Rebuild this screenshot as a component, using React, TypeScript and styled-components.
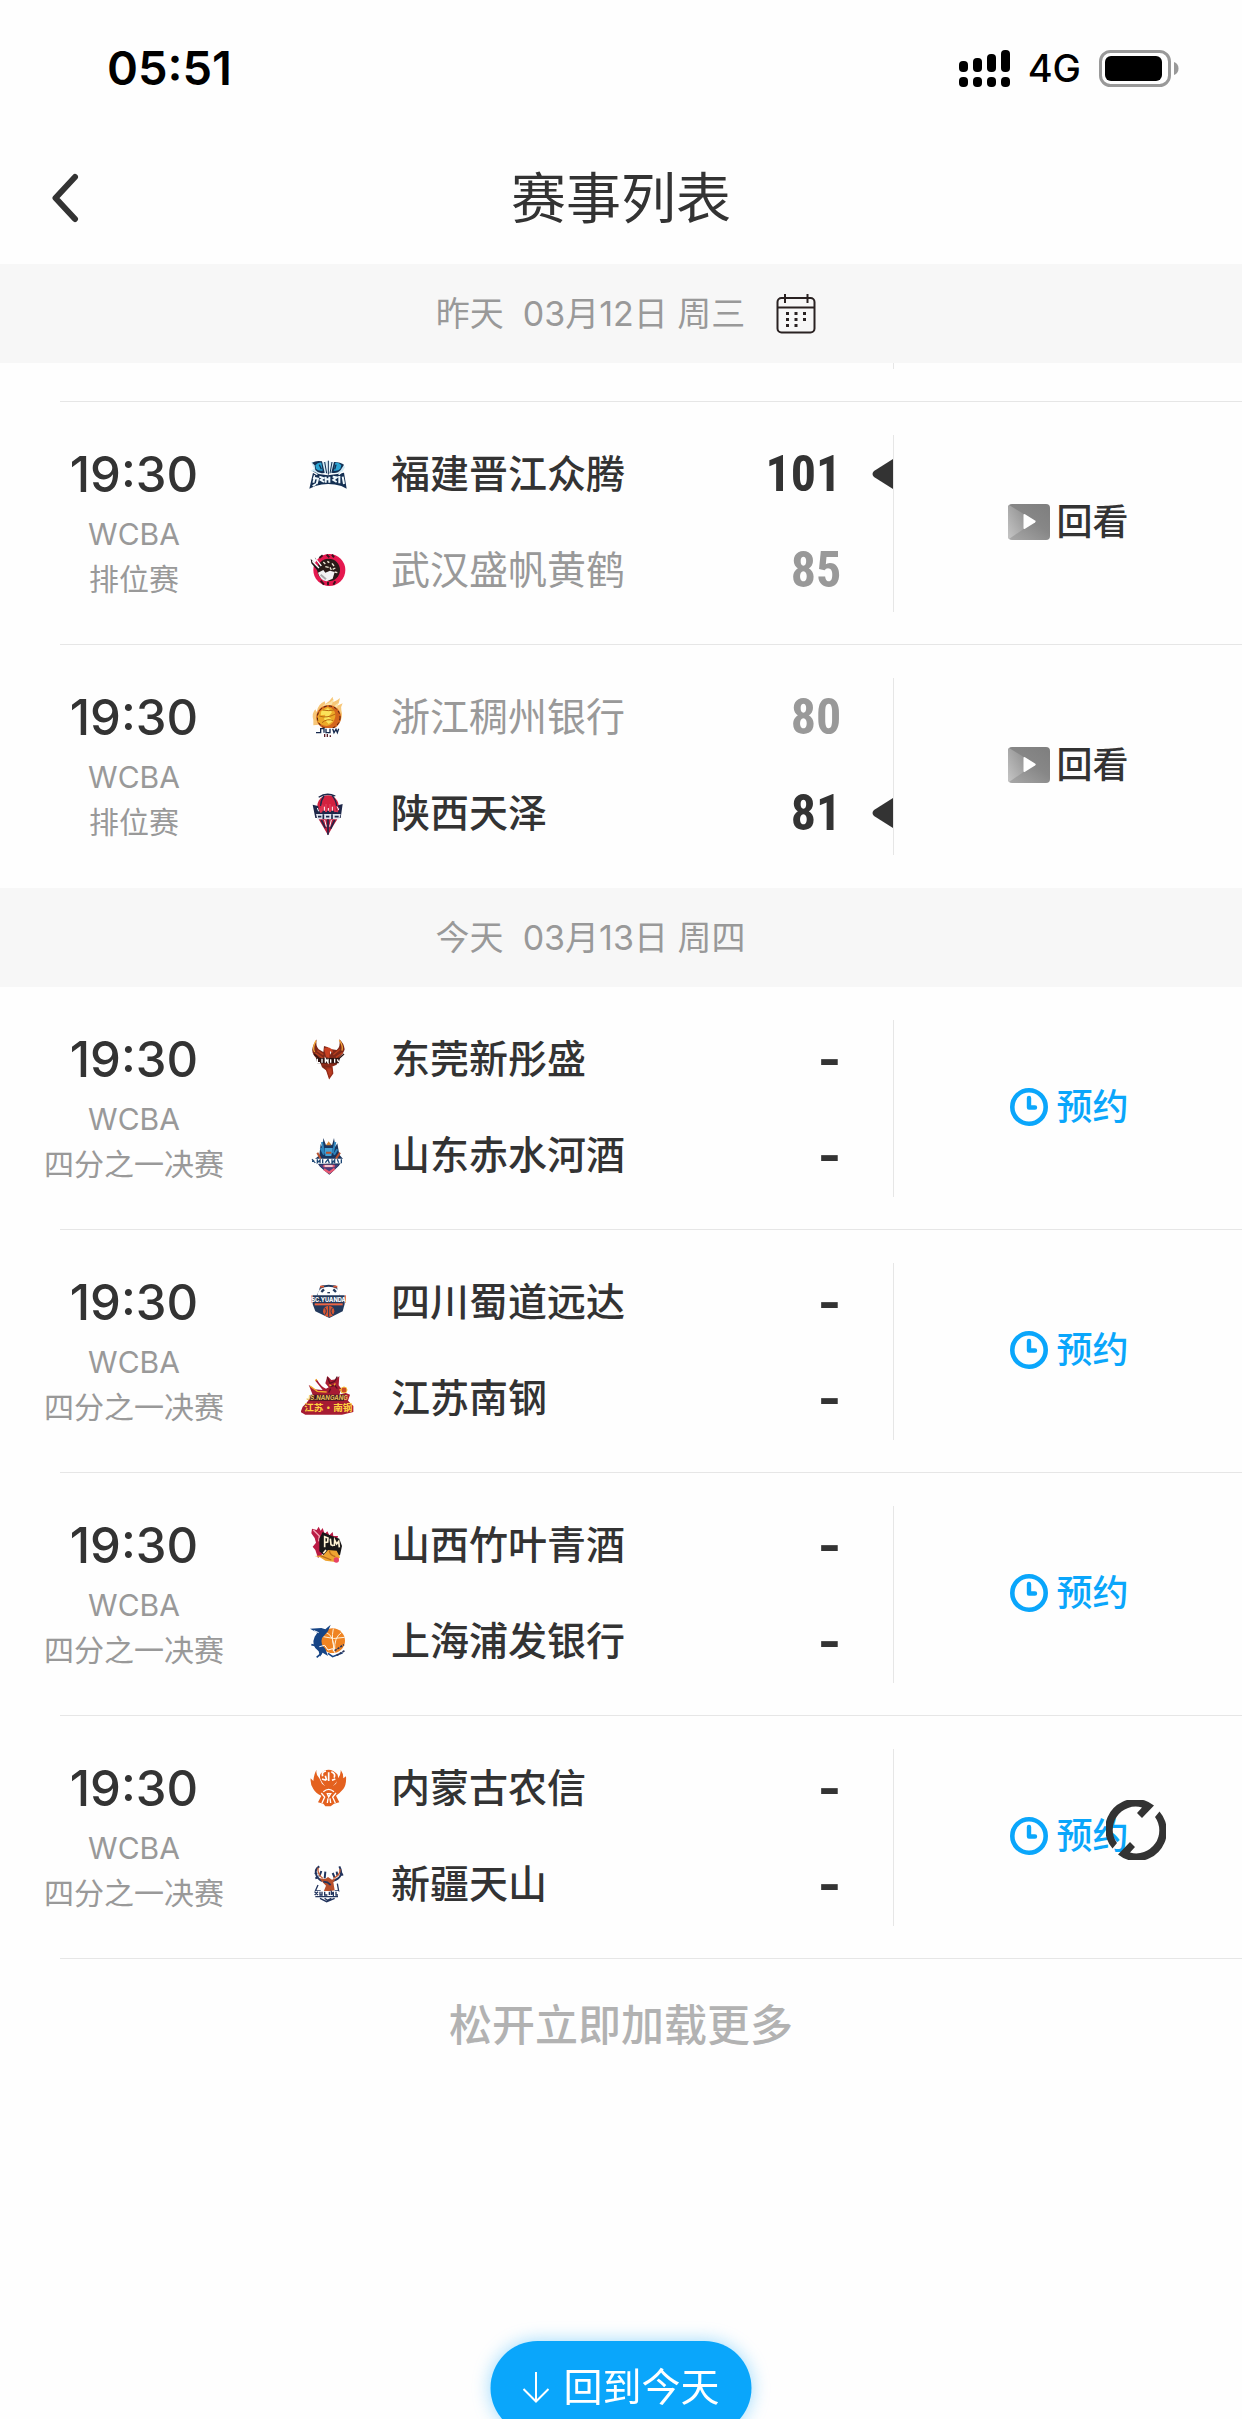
import React from 'react';
import styled, { createGlobalStyle } from 'styled-components';

const INK = '#333333';
const MUTED = '#999999';
const BLUE = '#0aa6fb';
const LINE = '#e6e6e6';

const GlobalStyle = createGlobalStyle`
  *, *::before, *::after { box-sizing: border-box; }
  body {
    margin: 0;
    background: #fefefe;
    color: ${INK};
    font-family: Inter, "Noto Sans CJK SC", sans-serif;
  }
  button { font: inherit; color: inherit; background: none; border: 0; padding: 0; cursor: pointer; }
  svg { display: block; }
`;

const Page = styled.div`
  position: relative;
  min-height: 100vh;
  overflow: hidden;
`;

const StatusBar = styled.div`
  display: flex;
  align-items: center;
  justify-content: space-between;
  height: 136px;
  padding: 0 63px 0 107px;
  color: #000;
`;

const Clock = styled.span`
  font-size: 47px;
  line-height: 56px;
  font-weight: 600;
`;

const StatusIcons = styled.div`
  display: flex;
  align-items: center;
  gap: 18px;
  font-size: 38px;
  line-height: 48px;
  font-weight: 500;
`;

const NavBar = styled.header`
  display: grid;
  grid-template-columns: 160px 1fr 160px;
  align-items: center;
  height: 128px;
  padding-bottom: 5px;
`;

const BackButton = styled.button`
  display: flex;
  align-items: center;
  height: 88px;
  padding-left: 50px;
`;

const Title = styled.h1`
  margin: 0;
  font-size: 55px;
  line-height: 80px;
  font-weight: 400;
  text-align: center;
`;

const DayBar = styled.div`
  display: flex;
  align-items: center;
  justify-content: center;
  gap: 31px;
  height: 99px;
  background: #f7f7f7;
  color: ${MUTED};
  font-size: 34px;
  line-height: 48px;
  white-space: pre;
`;

const CalendarSlot = styled.span`
  display: flex;
  flex: 0 0 30px;
  width: 30px;
`;

const List = styled.ul`
  list-style: none;
  margin: 0;
  padding: 0;
`;

const Row = styled.li`
  display: grid;
  grid-template-columns: 268px 1fr 28%;
  height: 243px;
  padding: 33px 0;
  background: linear-gradient(${LINE}, ${LINE}) 60px 100% / 100% 1px no-repeat;
  &[data-last='true'] { background: none; }
`;

const PreviousRow = styled(Row)`
  height: 39px;
  padding: 0 0 33px;
`;

const When = styled.div`
  display: flex;
  flex-direction: column;
  align-items: center;
  color: ${MUTED};
  font-size: 30px;
  line-height: 45px;
  white-space: nowrap;
`;

const Time = styled.time`
  padding-top: 2px;
  color: ${INK};
  font-size: 49px;
  line-height: 75px;
  font-weight: 500;
`;

const Teams = styled.div`
  grid-column: 2;
  display: flex;
  flex-direction: column;
  gap: 24px;
  border-right: 1px solid ${LINE};
  padding-left: 33px;
`;

const Team = styled.div<{ $muted: boolean }>`
  display: grid;
  grid-template-columns: 54px 1fr auto 52px;
  align-items: center;
  height: 72px;
  color: ${(p) => (p.$muted ? MUTED : INK)};
  font-weight: ${(p) => (p.$muted ? 400 : 500)};
  &:first-child { margin-top: 3px; }
`;

const TeamName = styled.span`
  padding-left: 36px;
  font-size: 39px;
  line-height: 58px;
`;

const Score = styled.span<{ $pending: boolean }>`
  font-family: ${(p) => (p.$pending ? 'Inter, sans-serif' : '"Roboto Condensed", "Liberation Sans", sans-serif')};
  font-size: 50px;
  line-height: 60px;
  font-weight: 700;
`;

const WinnerSlot = styled.span`
  display: flex;
  justify-content: flex-end;
`;

const ActionCell = styled.div`
  display: flex;
  align-items: center;
  justify-content: center;
  padding-bottom: 3px;
`;

const ActionButton = styled.button<{ $blue: boolean }>`
  display: grid;
  grid-template-columns: 42px auto;
  align-items: center;
  justify-items: center;
  gap: 7px;
  color: ${(p) => (p.$blue ? BLUE : INK)};
  font-size: 36px;
  line-height: 54px;
  font-weight: 500;
`;

const LoadMore = styled.p`
  margin: 0;
  padding: 34px 0 320px;
  color: #b2b2b2;
  font-size: 43px;
  line-height: 64px;
  font-weight: 500;
  text-align: center;
`;

const Spinner = styled.div`
  position: fixed;
  right: 76px;
  bottom: 559px;
`;

const TodayButton = styled.button`
  position: fixed;
  left: 50%;
  bottom: -16px;
  transform: translateX(-50%);
  display: flex;
  align-items: center;
  gap: 14px;
  height: 94px;
  padding: 0 32px 2px;
  border-radius: 47px;
  background: ${BLUE};
  box-shadow: 0 0 18px rgba(10, 166, 251, 0.4);
  color: #fff;
  font-size: 39px;
  line-height: 58px;
  white-space: nowrap;
`;

const SignalIcon = () => (
  <svg width="51" height="37" viewBox="0 0 51 37" aria-hidden="true">
    {[11, 8, 4, 0].map((top, i) => (
      <g key={top}>
        <rect x={i * 14} y={top} width="9" height={22 - top} rx="4" />
        <rect x={i * 14} y="27" width="9" height="10" rx="4" />
      </g>
    ))}
  </svg>
);

const BatteryIcon = () => (
  <svg width="80" height="37" viewBox="0 0 80 37" aria-hidden="true">
    <rect x="1.5" y="1.5" width="69" height="34" rx="10" fill="none" stroke="#999" strokeWidth="3" />
    <rect x="6" y="6" width="57" height="25" rx="6" />
    <path d="M75 12c3 1 4.500 3.500 4.500 6.500s-1.500 5.500-4.500 6.500z" fill="#999" />
  </svg>
);

const BackIcon = () => (
  <svg width="30" height="50" viewBox="0 0 30 50" fill="none" stroke={INK} strokeWidth="6" strokeLinecap="round" strokeLinejoin="round" aria-hidden="true">
    <path d="M25 4L5.500 25 25 46" />
  </svg>
);

const CalendarIcon = () => (
  <svg width="40" height="40" viewBox="0 0 40 40" aria-hidden="true">
    <g fill="none" stroke="#2a2222" strokeWidth="2">
      <rect x="1.500" y="4" width="37" height="34.500" rx="4" />
      <path d="M1.500 13.500h37M9 0v9M31.500 0v9" />
    </g>
    <g fill="#2a2222">
      {[18, 24, 30].map((y) =>
        [10, 18.5, 27].map((x) => (y === 30 && x === 27 ? null : <rect key={`${x}-${y}`} x={x} y={y} width="3" height="3" />)),
      )}
    </g>
  </svg>
);

const WinnerMark = () => (
  <svg width="21" height="32" viewBox="0 0 21 32" aria-label="胜">
    <path d="M21 1v30L2 19q-3-3 0-6z" fill={INK} />
  </svg>
);

const ReplayIcon = () => (
  <svg width="42" height="36" viewBox="0 0 42 36" aria-hidden="true">
    <defs>
      <linearGradient id="replayFold" x1="0" y1="1" x2="1" y2="0.300">
        <stop offset="0" stopColor="#c6c6c6" />
        <stop offset="1" stopColor="#858585" />
      </linearGradient>
      <linearGradient id="replayBase" x1="0" y1="1" x2="0.800" y2="0">
        <stop offset="0" stopColor="#a9a9a9" />
        <stop offset="0.600" stopColor="#878787" />
        <stop offset="1" stopColor="#808080" />
      </linearGradient>
    </defs>
    <rect width="42" height="36" rx="4" fill="url(#replayBase)" />
    <path d="M1 1L27 17 1 35Q0 34 0 32V4Q0 2 1 1z" fill="url(#replayFold)" />
    <path d="M15.500 11q0-1.500 1.500-.7L27 16.500q1.500 1 0 2L17 24.700q-1.500.8-1.500-.7z" fill="#fff" />
  </svg>
);

const ClockIcon = () => (
  <svg width="38" height="38" viewBox="0 0 38 38" fill="none" stroke={BLUE} aria-hidden="true">
    <circle cx="19" cy="19" r="16.700" strokeWidth="4.600" />
    <path d="M19 10v9.500h6" strokeWidth="4.400" strokeLinecap="round" strokeLinejoin="round" />
  </svg>
);

const SpinnerIcon = () => (
  <svg width="60" height="60" viewBox="0 0 60 60" fill={INK} role="img" aria-label="加载中">
    <path d="M6.500 48.500A30 30 0 0 1 48 5.500L36 18l-5-5 5-5.500A23 23 0 0 0 11 43z" />
    <path d="M53.500 11.500A30 30 0 0 1 12 54.500L24 42l5 5-5 5.500A23 23 0 0 0 49 17z" />
  </svg>
);

const DownIcon = () => (
  <svg width="27" height="31" viewBox="0 0 27 31" fill="none" stroke="#fff" strokeWidth="2" aria-hidden="true">
    <path d="M13.500 0v29M1 17l12.500 12.500L26 17" />
  </svg>
);

const emblems: Record<string, { cy: number; art: React.ReactNode }> = {
  fujian: {
    cy: 102,
    art: (
      <>
        <path d="M93 66l22 4 28-6 30 6 14-2 8 14-10 18H104l-12-8 10-6z" fill="#cfeaf5" />
        <path d="M96 68q14-8 30-4l8 34q-16 6-28-8l-2-14zM192 74q-14-10-30-8l-8 32q18 4 28-8z" fill="#142f52" />
        <path d="M106 76q8-10 18-8l4 24q-14 2-20-6zM184 76q-8-10-18-8l-5 24q14 2 20-6z" fill="#2ba4d3" />
        <path d="M118 74l6 14M168 74l-4 14" stroke="#142f52" strokeWidth="4" />
        <path d="M139 64h12l2 34h-16z" fill="#e8f5fa" />
        <path d="M145 62v42M134 66l6 34M156 66l-6 34" stroke="#142f52" strokeWidth="3" fill="none" />
        <path d="M100 94l16 8 28 4 28-4 20-4 8 48-16-8q-40-12-78 0l-18 8 6-26z" fill="#142f52" />
        <path d="M98 96l14 8M186 96l-10 8M104 106l-4 12" stroke="#fff" strokeWidth="4" />
        <path d="M100 128l4-14 10 2-4 16M118 110l12 4-8 6 10 6M137 110v18M137 118h9M148 110v18M158 110l12 2-10 8 10 6M178 108v22M188 110l4 22M98 138l10-6" stroke="#eef8fc" strokeWidth="6" fill="none" />
      </>
    ),
  },
  wuhan: {
    cy: 390,
    art: (
      <>
        <circle cx="148" cy="390" r="48" fill="#e5184f" />
        <path d="M118 354l10-8M140 344l8 8M156 344l6 8M122 422l10 12M144 436v-10M160 434l6-10" stroke="#3b121c" strokeWidth="6" />
        <circle cx="146" cy="390" r="34" fill="#2a1b18" />
        <path d="M92 356l28 30-4 10-22-26zM104 352l24 28-8 2z" fill="#1e1a1a" />
        <path d="M97 364l20 20M108 358l16 20" stroke="#fff" strokeWidth="4" />
        <path d="M114 398l16-8 6 8 14-6 14 4-6 20-18 8q-20-4-26-26z" fill="#f3f3f3" />
        <path d="M122 404l16 14" stroke="#aaa" strokeWidth="6" />
        <path d="M130 366l6 6M142 364l6 4M156 370l6 8M166 384l-8 4M136 380l10 2M164 396l8 2M150 382l4 8" stroke="#f1ead9" strokeWidth="4" />
      </>
    ),
  },
  zhejiang: {
    cy: 111,
    art: (
      <>
        <path d="M100 120q-6-20 6-32l4 8q4-24 24-32l2 8q12-6 22-22l2 16q12-4 20-12-2 16-10 24l18-8q-6 10-4 20 6 22-6 38l-78 8z" fill="#f7c779" />
        <path d="M126 84q4-12 12-12 14-4 24-16-4 14-10 24zM160 82q8-10 16-14l-6 18z" fill="#fbe3a9" />
        <circle cx="146" cy="112" r="37" fill="#d4661c" />
        <path d="M112 124q-2-34 30-44 26 4 24 30-6 26-26 28-18-2-28-14z" fill="#eda928" />
        <path d="M124 94l20-10 12 12-10 14 14 12-14 10-14-14 4-14-14 2z" fill="#fbe25a" />
        <path d="M128 90q20 4 34 0M118 108q22 8 48-6M126 128q16-14 34-6" stroke="#b86a10" strokeWidth="3" fill="none" />
        <circle cx="146" cy="112" r="34" fill="none" stroke="#4a1c14" strokeWidth="3" strokeDasharray="9 7" />
        <path d="M106 144h78l-6 16h-64z" fill="#fff" />
        <path d="M108 158h14v-12h10v12M138 146v12h12v-12M158 146l4 12 6-10 4 10 4-12" stroke="#16294d" strokeWidth="4" fill="none" />
        <path d="M134 162v9M142 162v9M151 166v5" stroke="#5a1f28" strokeWidth="4" />
      </>
    ),
  },
  shaanxi: {
    cy: 399,
    art: (
      <>
        <circle cx="144" cy="378" r="32" fill="#d3213f" />
        <path d="M116 352q22-16 50-4M132 348q-10 14-10 30M156 346q12 14 14 32" stroke="#1e2749" strokeWidth="4" fill="none" />
        <path d="M98 374l16 4 4 14h50l6-16 14-4-6 42H106z" fill="#1e2749" />
        <path d="M118 384l6 14M128 374l-4 22M138 372v24M150 372v24M162 376l4 20M176 384l-6 12" stroke="#dd3352" strokeWidth="6" />
        <path d="M112 384l4 10M133 380v12M145 384v8M157 380v12M172 380l4 10" stroke="#fff" strokeWidth="3" />
        <path d="M108 402h74l-4 16H112z" fill="#dfe3ed" />
        <path d="M114 410h10M130 403v14M138 410h10M156 403v14M164 410h12" stroke="#1e2749" strokeWidth="5" />
        <path d="M116 418h56l-14 22-14 26-16-28z" fill="#b91d3c" />
        <path d="M124 420l12 24M144 418v46M164 420l-12 26" stroke="#1e2749" strokeWidth="5" />
        <path d="M134 420l5 20M154 420l-5 20" stroke="#fff" strokeWidth="3" />
      </>
    ),
  },
  dongguan: {
    cy: 117,
    art: (
      <>
        <path d="M110 58q-18 28-12 40 6 16 20 22l8 22 14 10 8 24 8-20-4-14 18-8 8-22q14-14 16-24-2-18-16-30 4 24-8 32l-14-2-4 16-8-22-12-4-2 18-14-8q-10-10-6-30z" fill="#7e2819" />
        <path d="M108 62q-12 22-4 34M178 60q12 18 8 32" stroke="#f4a83a" strokeWidth="4" fill="none" />
        <path d="M106 98l22 16M112 92l18 12M188 98l-20 14M180 88l-20 16" stroke="#b8401f" strokeWidth="4" />
        <path d="M102 102l20 18M192 102l-20 18" stroke="#2d1210" strokeWidth="4" />
        <path d="M132 86q10-10 24 2l4 10-10-4-2 20-10-4z" fill="#c84022" />
        <path d="M108 114h72l-4 16h-64z" fill="#2d1210" />
        <path d="M112 116v12h8M126 116v12M136 128v-12l8 12v-12M152 118v10M164 116v12M172 118l4 8" stroke="#fff" strokeWidth="4" fill="none" />
        <path d="M126 134l36 2M138 144l18-2 2 18-10 14z" stroke="#962c1a" strokeWidth="4" fill="#b83c22" />
      </>
    ),
  },
  shandong: {
    cy: 405,
    art: (
      <>
        <path d="M130 354l8 22 10-8 8 8 6-22 4 26 6-10 6 34 12 14-14 20-28 26-28-24-16-22 14-12 4-34 6 12z" fill="#19355f" />
        <path d="M126 366l6 34M166 366l-8 34M122 384l10 20M172 388l-10 16" stroke="#2f86be" strokeWidth="6" />
        <path d="M138 376l8-12 8 12z" fill="#d98531" />
        <path d="M134 384h24l-4 24h-18z" fill="#46a2d5" />
        <path d="M112 398l10 18M180 398l-12 18M138 398h16" stroke="#b8512f" strokeWidth="6" />
        <path d="M94 416h102l-8 14-86 2z" fill="#fff" />
        <path d="M96 418l10 10M112 418v10l8-8v10M128 418v12M136 428l8-10 4 12M156 418v12l8-10v10M172 418l4 10M184 418v12M96 424h8" stroke="#1d4775" strokeWidth="4" fill="none" />
        <path d="M116 434h60l-26 28z" fill="#4b3d7c" />
        <path d="M130 438h34M132 448l16 10 16-12" stroke="#e85972" strokeWidth="7" fill="none" />
        <path d="M134 438h24" stroke="#fff" strokeWidth="4" />
      </>
    ),
  },
  sichuan: {
    cy: 126,
    art: (
      <>
        <path d="M118 90q0-16 16-14 12-4 24 0 16-2 14 14l8 16H110z" fill="#23395c" />
        <path d="M112 102q6-22 34-22t34 22l-4 8h-60z" fill="#fff" />
        <path d="M120 80h12M160 80h12" stroke="#e15b35" strokeWidth="5" />
        <path d="M132 88l-8 8M160 88l8 8" stroke="#23395c" strokeWidth="7" />
        <path d="M142 98h8" stroke="#23395c" strokeWidth="4" />
        <path d="M98 106h96v26l-6 22-40 20-42-20-8-22z" fill="#23395c" />
        <path d="M96 106v22M196 106v22" stroke="#e15b35" strokeWidth="3" />
        <text x="146" y="125" textAnchor="middle" fontFamily="Inter, sans-serif" fontSize="17" fontWeight="800" fill="#fff">SC.YUANDA</text>
        <path d="M104 133h84" stroke="#ec6544" strokeWidth="6" />
        <circle cx="146" cy="154" r="17" fill="#d75632" />
        <path d="M146 138v32M134 143q10 10 0 22M158 143q-10 10 0 22" stroke="#23395c" strokeWidth="3" fill="none" />
      </>
    ),
  },
  jiangsu: {
    cy: 414,
    art: (
      <>
        <path d="M86 374l16 14 26 2-22-28 4-4q14 24 28 28l8-4-10-12 6-22 12 12 14-2 10-10-2 28 8 10-6 18 18-6 14 6-6 18 16 16v18l-34 8H76l-14-8 6-16 12-12 10-14 8-10z" fill="#a61c33" />
        <path d="M142 352l8 18 14-6 8-14M150 380l14-4 8 10M152 386l-6 12" stroke="#5c1020" strokeWidth="4" fill="none" />
        <path d="M148 374l6 4M166 370l-4 6M90 378l22 16 28 2M106 362l4-4M178 390l16-4M184 398l12-6" stroke="#f0a629" strokeWidth="4" fill="none" />
        <circle cx="192" cy="390" r="9" fill="#ce4a27" stroke="#f2c442" strokeWidth="3" />
        <path d="M92 404h104l-4 18H88z" fill="#3b1522" />
        <text x="142" y="421" textAnchor="middle" fontFamily="Inter, sans-serif" fontSize="18" fontStyle="italic" fontWeight="700" fill="#e9c25a">JS.NANGANG</text>
        <text x="145" y="454" textAnchor="middle" fontFamily="Noto Sans CJK SC, sans-serif" fontSize="29" fontWeight="700" fill="#ffd23e">江苏·南钢</text>
      </>
    ),
  },
  shanxi: {
    cy: 135,
    art: (
      <>
        <path d="M96 86l14 4 6-10 6 12 6-8 6 18 8-8 6 12 10-10 2 12 14 0-4 16-56 50-8-24-8-10 10-12-4-14-10-14z" fill="#ba1b44" />
        <path d="M100 90l18 18-2 16" stroke="#f3a6b7" strokeWidth="4" fill="none" />
        <path d="M118 116l10-20 18 8 32 12 8 22-6 28-42 6-20-18z" fill="#191717" />
        <path d="M134 142v-32l10 4-1 12-8 1M151 116l2 18 7 3M163 138l1-18 6 12 6-8 2 18M138 150l-8 10" stroke="#fff3d3" strokeWidth="5" fill="none" />
        <path d="M104 168l26-2 14-16 26 2 10 20-14 14-30-4-16-10z" fill="#eea431" />
        <path d="M120 166l34 14M148 152q2 14 18 18" stroke="#b96a19" strokeWidth="4" fill="none" />
        <circle cx="169" cy="180" r="8" fill="#e74365" />
      </>
    ),
  },
  shanghai: {
    cy: 423,
    art: (
      <>
        <circle cx="158" cy="422" r="37" fill="#ef8423" />
        <path d="M160 386q-8 36 6 66M130 410q30 10 64 2M136 396q30 12 24 58M184 398q-22 14-20 54" stroke="#fff1da" strokeWidth="3" fill="none" />
        <path d="M90 386l34-2 12 4 16-14-8 20-18 20q-6 20 10 32l8 22-16-10-8 12-4-16q-24-18-12-44l8-12z" fill="#164485" />
        <path d="M94 434l18 4M110 472l14-12M144 460l14 10 30-12" stroke="#164485" strokeWidth="5" fill="none" />
        <path d="M118 440l16-4 10 14 14-4 8 14M102 392l14 6" stroke="#fff" strokeWidth="3" fill="none" />
        <path d="M164 452l28-18M170 466l24-14" stroke="#2b3458" strokeWidth="5" strokeDasharray="7 3" />
      </>
    ),
  },
  neimenggu: {
    cy: 129,
    art: (
      <>
        <path d="M110 74q-4 14 8 26l8 16 10 8q-22-24-14-38 10-12 24-12t26 14q8 16-14 36l10-8 6-16q10-14 8-26 8 10 8 26l8-6q2 24-8 38-10 12-22 20l10 20-16 4-10 8h-16l-6-8-16-4 10-20q-16-6-24-20-10-14-8-32l8 8q2-22 10-34z" fill="#e4611f" />
        <path d="M128 94q-4-14 10-16M146 82v26M154 80q14 6 8 18M126 102l12 4M156 106l10-4M136 92l4 14" stroke="#fff" strokeWidth="5" fill="none" />
        <path d="M130 140q16-14 32 0M124 144l10 12-8 18M168 144l-10 12 8 18M142 146h10l-6 10zM144 160l-2 14M150 160l2 14" stroke="#fff" strokeWidth="4" fill="none" />
      </>
    ),
  },
  xinjiang: {
    cy: 417,
    art: (
      <>
        <path d="M118 364q-14 8-10 22 2 14 18 22M112 386l-8-2M116 396l-10 4M124 378l-6 16M136 380l-2 20M178 364q8 16 4 26-4 12-24 18M184 384l4 8M172 392l-2-12M164 398l-6-14" stroke="#22345d" strokeWidth="6" fill="none" />
        <path d="M114 368q-2 20 14 32M180 372q2 18-20 28" stroke="#c55c34" strokeWidth="4" fill="none" />
        <path d="M118 400l18 2 8-6 12 8 12-4-8 12 4 24-34 6 8-20-8-8z" fill="#b84f2b" />
        <path d="M130 410l12 2 10 8" stroke="#22345d" strokeWidth="5" fill="none" />
        <path d="M114 420l-8 18h16M172 416l4 22h-12" stroke="#22345d" strokeWidth="4" fill="none" />
        <path d="M104 438h72v14h-72z" fill="#fff" />
        <path d="M104 440l10 10M114 440l-10 10M120 440v10h6v-10M134 440v10h8M148 440v10M154 450v-10l6 10v-10M168 440v10h6" stroke="#22345d" strokeWidth="4" fill="none" />
        <path d="M106 455h68M120 460l20 10 24-10M134 460l8 6 12-6" stroke="#22345d" strokeWidth="4" fill="none" />
      </>
    ),
  },
};

const Emblem = ({ id }: { id: string }) => {
  const { cy, art } = emblems[id];
  return (
    <svg width="54" height="48" viewBox={`63 ${cy - 72} 162 144`} aria-hidden="true">
      {art}
    </svg>
  );
};

type Side = { id: string; name: string; score?: number };
type Match = { stage: string; sides: [Side, Side] };

const yesterday: Match[] = [
  { stage: '排位赛', sides: [{ id: 'fujian', name: '福建晋江众腾', score: 101 }, { id: 'wuhan', name: '武汉盛帆黄鹤', score: 85 }] },
  { stage: '排位赛', sides: [{ id: 'zhejiang', name: '浙江稠州银行', score: 80 }, { id: 'shaanxi', name: '陕西天泽', score: 81 }] },
];

const today: Match[] = [
  { stage: '四分之一决赛', sides: [{ id: 'dongguan', name: '东莞新彤盛' }, { id: 'shandong', name: '山东赤水河酒' }] },
  { stage: '四分之一决赛', sides: [{ id: 'sichuan', name: '四川蜀道远达' }, { id: 'jiangsu', name: '江苏南钢' }] },
  { stage: '四分之一决赛', sides: [{ id: 'shanxi', name: '山西竹叶青酒' }, { id: 'shanghai', name: '上海浦发银行' }] },
  { stage: '四分之一决赛', sides: [{ id: 'neimenggu', name: '内蒙古农信' }, { id: 'xinjiang', name: '新疆天山' }] },
];

const MatchRow = ({ match, last = false }: { match: Match; last?: boolean }) => {
  const played = match.sides[0].score !== undefined;
  const best = Math.max(...match.sides.map((s) => s.score ?? 0));
  return (
    <Row data-last={last}>
      <When>
        <Time>19:30</Time>
        <span>WCBA</span>
        <span>{match.stage}</span>
      </When>
      <Teams>
        {match.sides.map((side) => (
          <Team key={side.id} $muted={played && side.score !== best}>
            <Emblem id={side.id} />
            <TeamName>{side.name}</TeamName>
            <Score $pending={!played}>{side.score ?? '-'}</Score>
            <WinnerSlot>{played && side.score === best && <WinnerMark />}</WinnerSlot>
          </Team>
        ))}
      </Teams>
      <ActionCell>
        <ActionButton type="button" $blue={!played}>
          {played ? <ReplayIcon /> : <ClockIcon />}
          {played ? '回看' : '预约'}
        </ActionButton>
      </ActionCell>
    </Row>
  );
};

export default function App() {
  return (
    <Page>
      <GlobalStyle />
      <StatusBar>
        <Clock>05:51</Clock>
        <StatusIcons>
          <SignalIcon />
          4G
          <BatteryIcon />
        </StatusIcons>
      </StatusBar>
      <NavBar>
        <BackButton type="button" aria-label="返回">
          <BackIcon />
        </BackButton>
        <Title>赛事列表</Title>
      </NavBar>
      <DayBar>
        <span>昨天  03月12日 周三</span>
        <CalendarSlot>
          <button type="button" aria-label="选择日期">
            <CalendarIcon />
          </button>
        </CalendarSlot>
      </DayBar>
      <List>
        <PreviousRow aria-hidden="true">
          <Teams />
        </PreviousRow>
        {yesterday.map((match, i) => (
          <MatchRow key={match.sides[0].id} match={match} last={i === yesterday.length - 1} />
        ))}
      </List>
      <DayBar>
        <span>今天  03月13日 周四</span>
        <CalendarSlot />
      </DayBar>
      <List>
        {today.map((match) => (
          <MatchRow key={match.sides[0].id} match={match} />
        ))}
      </List>
      <LoadMore>松开立即加载更多</LoadMore>
      <Spinner>
        <SpinnerIcon />
      </Spinner>
      <TodayButton type="button">
        <DownIcon />
        回到今天
      </TodayButton>
    </Page>
  );
}
